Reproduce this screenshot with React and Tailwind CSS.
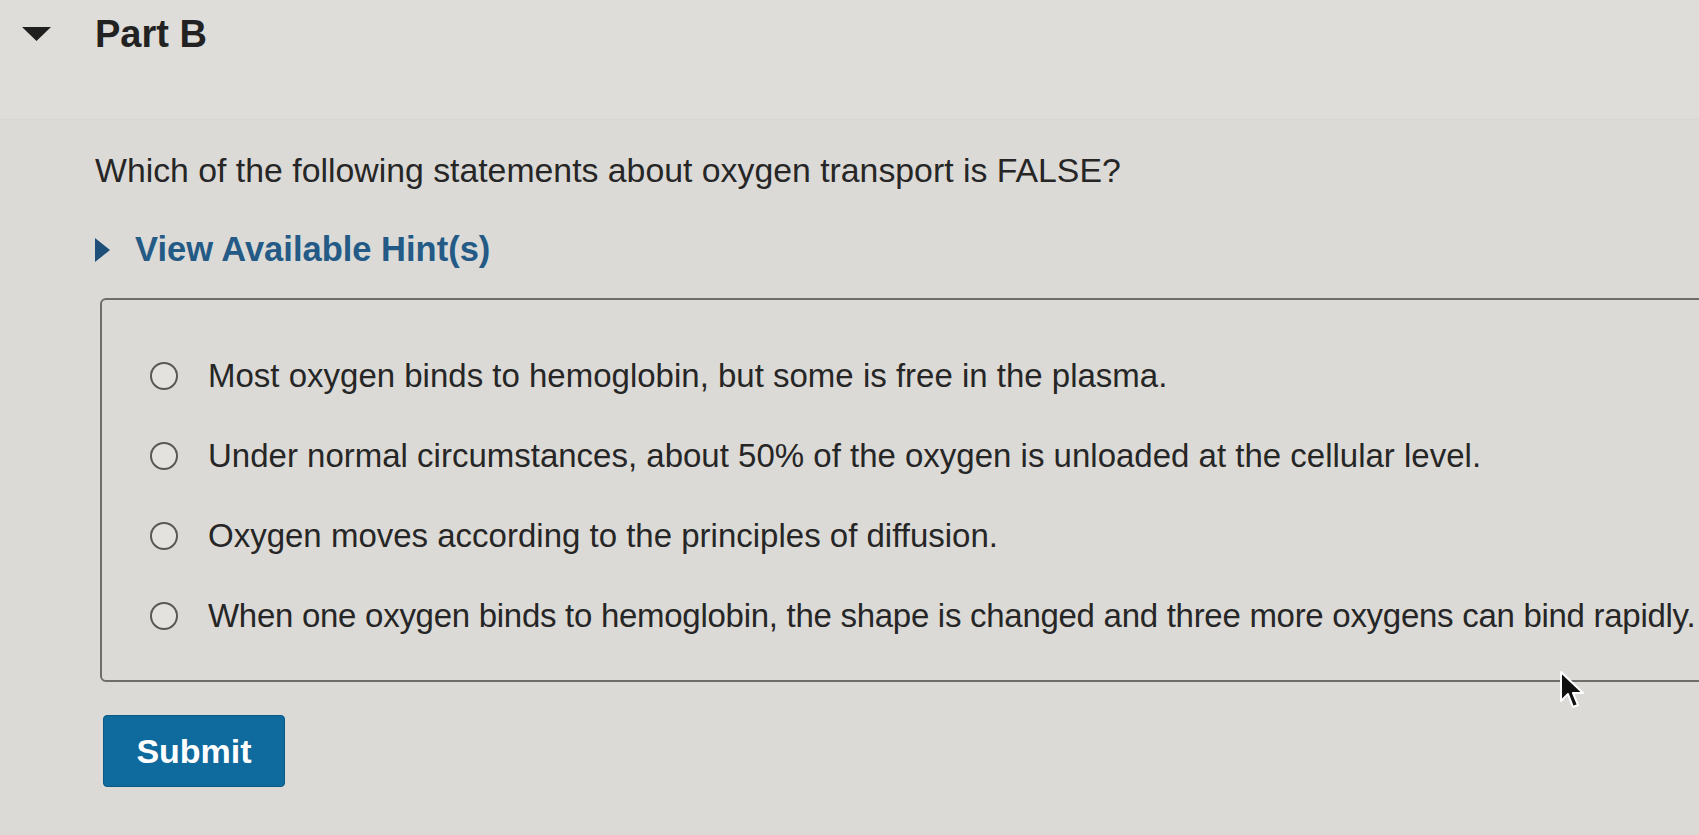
import React from "react";

const options = [
  { t: "Most oxygen binds to hemoglobin, but some is free in the plasma.", c: "" },
  { t: "Under normal circumstances, about 50% of the oxygen is unloaded at the cellular level.", c: "" },
  { t: "Oxygen moves according to the principles of diffusion.", c: "" },
  { t: "When one oxygen binds to hemoglobin, the shape is changed and three more oxygens can bind rapidly.", c: "tracking-[-0.28px]" },
];

export default function App() {
  return (
    <div
      className="relative w-[1699px] h-[835px] overflow-hidden bg-[#dcdad6] text-[#262626]"
      style={{ fontFamily: '"Liberation Sans", Arial, sans-serif' }}
    >
      {/* Header */}
      <div className="h-[120px] bg-[#dfddd9] border-b border-[#d8d6d2] flex items-start pt-[12px]">
        <div className="w-[95px] flex pl-[22px] pt-[14px]">
          <svg width="29" height="16" viewBox="0 0 29 16">
            <polygon points="0,1 29,1 14.5,15" fill="#1f1f1f" />
          </svg>
        </div>
        <h2 className="text-[38px] leading-[44px] font-bold text-[#222]">Part B</h2>
      </div>

      {/* Question */}
      <div className="pl-[95px] pt-[30px]">
        <p className="text-[33.8px] leading-[40px]">
          Which of the following statements about oxygen transport is FALSE?
        </p>
        <div className="flex items-center mt-[40px] h-[40px]">
          <svg width="17" height="24" viewBox="0 0 17 24" className="ml-[-1px]">
            <polygon points="1,0 16,12 1,24" fill="#1d4f78" />
          </svg>
          <span className="ml-[24px] text-[34.5px] font-bold text-[#245a86]">View Available Hint(s)</span>
        </div>
      </div>

      {/* Answer box */}
      <div className="ml-[100px] mt-[28px] w-[1680px] h-[384px] border-2 border-[#6f6d6a] rounded-[6px] pt-[36px] flex flex-col">
        {options.map((o) => (
          <label key={o.t} className="flex items-center h-[80px] pl-[48px]">
            <span className="w-[28px] h-[28px] rounded-full border-2 border-[#5a5856] bg-[#e4e2de] shrink-0" />
            <span className={`ml-[30px] text-[33px] leading-[40px] whitespace-nowrap text-[#262626] ${o.c}`}>{o.t}</span>
          </label>
        ))}
      </div>

      {/* Submit */}
      <div className="pl-[103px] pt-[33px]">
        <button className="w-[182px] h-[72px] rounded-[4px] bg-[#0f6a9d] border border-[#0b5884] text-white text-[34px] font-bold">
          Submit
        </button>
      </div>

      {/* Cursor */}
      <svg className="absolute left-[1559px] top-[671px]" width="26" height="40" viewBox="0 0 26 40">
        <path d="M2 1 L2 30 L9 23 L14 36 L19 34 L14 22 L24 22 Z" fill="#111" stroke="#fff" strokeWidth="2" strokeLinejoin="round" />
      </svg>
    </div>
  );
}
